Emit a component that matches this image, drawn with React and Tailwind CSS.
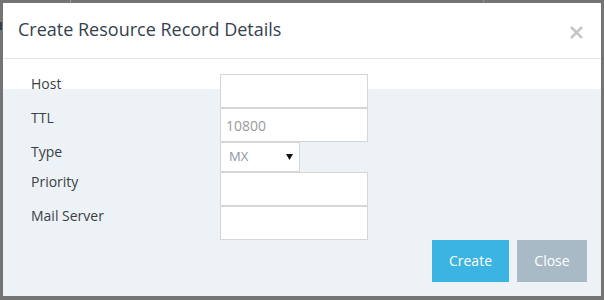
import React from "react";

const font = { fontFamily: '"Open Sans", "Liberation Sans", sans-serif' };

function Row({ label, children }) {
  return (
    <div className="flex items-start">
      <div className="w-[189px] text-[14px] leading-[20px] text-[#3b3f44]">{label}</div>
      {children}
    </div>
  );
}

function TextInput({ value }) {
  return (
    <div className="w-[148px] h-[34px] border border-[#d6d6d6] bg-white pl-[5px] flex items-center text-[14px] text-[#9a9a9a]">
      {value}
    </div>
  );
}

export default function App() {
  return (
    <div className="relative w-[604px] h-[300px] bg-[#747474] pt-[3px] pl-[3px] pr-[3px] pb-[4px]" style={font}>
      <div className="absolute left-[70px] top-0 w-[1px] h-[3px] bg-[#9a9a9a]" />
      <div className="absolute left-[483px] top-0 w-[1px] h-[3px] bg-[#8c8c8c]" />
      <div className="absolute left-0 top-[22px] w-[2px] h-[8px] bg-[#2d4256]" />
      <div className="relative flex flex-col h-full bg-white">
        <div className="flex items-start justify-between h-[56px] border-b border-[#e4e4e4] pl-[15px] pr-[18px] pt-[14px]">
          <div className="text-[18px] leading-[24px] text-[#35414d]">Create Resource Record Details</div>
          <svg width="13" height="13" viewBox="0 0 13 13" className="mt-[9px]">
            <path d="M1 1L12 12M12 1L1 12" stroke="#c6c6c6" strokeWidth="2.6" strokeLinecap="butt" />
          </svg>
        </div>
        <div className="flex-1 flex flex-col bg-[linear-gradient(to_bottom,#ffffff_30px,#edf2f6_30px)] pt-[15px] pl-[28px]">
          <Row label="Host"><TextInput value="" /></Row>
          <Row label="TTL"><TextInput value="10800" /></Row>
          <Row label="Type">
            <div className="w-[80px] h-[30px] border border-[#d6d6d6] bg-white flex items-center justify-between pl-[8px] pr-[6px] text-[13px] text-[#8b96a3]">
              <span>MX</span>
              <svg width="7" height="6" viewBox="0 0 7 6"><path d="M0 0H7L3.5 6Z" fill="#111" /></svg>
            </div>
          </Row>
          <Row label="Priority"><TextInput value="" /></Row>
          <Row label="Mail Server"><TextInput value="" /></Row>
          <div className="flex justify-end gap-[8px] pr-[14px]">
            <button className="w-[77px] h-[42px] bg-[#3bb4e4] text-white text-[14px] leading-[20px]">Create</button>
            <button className="w-[70px] h-[42px] bg-[#a8bac5] text-white text-[14px] leading-[20px]">Close</button>
          </div>
        </div>
      </div>
    </div>
  );
}
